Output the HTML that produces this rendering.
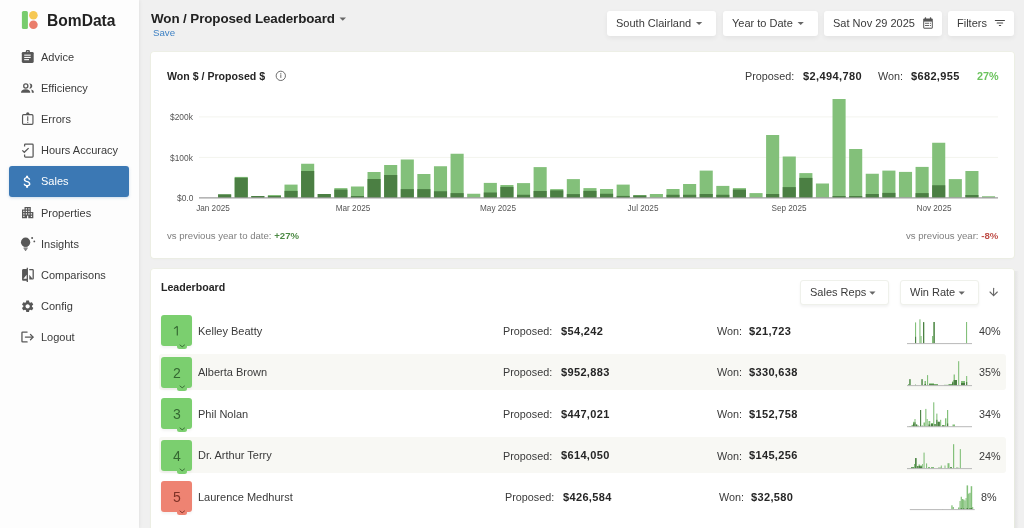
<!DOCTYPE html>
<html><head><meta charset="utf-8">
<style>
html,body{margin:0;padding:0;}
body{width:1024px;height:528px;overflow:hidden;position:relative;background:#f0f0f0;font-family:"Liberation Sans", sans-serif;}
.t{position:absolute;white-space:nowrap;line-height:normal;will-change:transform;}
</style></head><body>
<div style="position:absolute;left:0px;top:0px;width:139px;height:528px;background:#fdfdfd;box-shadow:0 0 4px rgba(0,0,0,0.09);"></div><svg style="position:absolute;left:0;top:0" width="140" height="40">
<rect x="21.9" y="11" width="6" height="18" rx="1.6" fill="#78cc6d"/>
<circle cx="33.4" cy="15.2" r="4.3" fill="#f6c853"/>
<circle cx="33.4" cy="24.8" r="4.3" fill="#ea7d6b"/>
</svg><div class="t" style="left:47.00px;top:12.48px;font-size:15.6px;font-weight:700;color:#222;">BomData</div><div style="position:absolute;left:9px;top:166.1px;width:120.2px;height:31.1px;background:#3b78b4;border-radius:3px;box-shadow:0 1px 3px rgba(59,120,180,0.25);"></div><svg style="position:absolute;left:0;top:0" width="140" height="360">
<g fill="#575757">
<rect x="21.8" y="52" width="11.9" height="10.9" rx="1.3"/>
<rect x="25.8" y="50" width="4.1" height="3" rx="1.2"/>
</g>
<g fill="#fdfdfd">
<circle cx="27.85" cy="51.6" r="0.55"/>
<rect x="24.2" y="54.6" width="6.5" height="1.1"/>
<rect x="24.2" y="56.9" width="6.5" height="1.1"/>
<rect x="24.2" y="59.1" width="4.8" height="1.1"/>
</g>
<g fill="#575757">
<circle cx="25.8" cy="86" r="2.1" fill="none" stroke="#575757" stroke-width="1.3"/>
<path d="M29.3 83.6 A2.45 2.45 0 1 1 29.3 88.4 A3.4 3.4 0 0 0 29.3 83.6 Z"/>
<path d="M21 92.8 Q21 89.2 25.65 89.2 Q30.3 89.2 30.3 92.8 Z"/>
<path d="M31.1 89.5 Q33.9 90 33.9 92.8 L31.9 92.8 Q31.9 90.8 31.1 89.5 Z"/>
</g>
<g fill="none" stroke="#575757" stroke-width="1.15">
<rect x="22.55" y="114.65" width="10.4" height="9.7" rx="1"/>
<path d="M25.9 115 C26.1 112.9 26.7 112.3 27.75 112.3 C28.8 112.3 29.4 112.9 29.6 115 Z" fill="#575757" stroke="none"/>
<path d="M24.6 146.6 V145 Q24.6 144.2 25.4 144.2 H32.3 Q33.1 144.2 33.1 145 V156.3 Q33.1 157.1 32.3 157.1 H25.4 Q24.6 157.1 24.6 156.3 V154.6" stroke-width="1.25"/>
<path d="M22.3 150.4 L24.3 152.3 L28.6 148.1" stroke-width="1.25"/>
</g>
<g fill="#575757">
<rect x="27.2" y="116.3" width="1.1" height="4.6"/>
<rect x="27.2" y="121.8" width="1.1" height="1.1"/>
</g>
<path fill="#ffffff" transform="translate(19.4,173.7) scale(0.667)" d="M11.8 10.9c-2.27-.59-3-1.2-3-2.15 0-1.09 1.01-1.85 2.7-1.85 1.78 0 2.440.85 2.5 2.1h2.21c-.07-1.72-1.12-3.3-3.210-3.81V3h-3v2.16c-1.94.42-3.5 1.68-3.5 3.61 0 2.31 1.91 3.46 4.7 4.13 2.5.6 3 1.48 3 2.41 0 .69-.49 1.79-2.7 1.79-2.06 0-2.87-.92-2.98-2.1h-2.2c.12 2.19 1.76 3.42 3.68 3.83V21h3v-2.15c1.95-.37 3.5-1.5 3.5-3.55 0-2.84-2.43-3.81-4.7-4.4z"/>
<path fill="#575757" transform="translate(20.1,205.1) scale(0.63)" d="M17 11V3H7v4H3v14h8v-4h2v4h8V11h-4zM7 19H5v-2h2v2zm0-4H5v-2h2v2zm0-4H5V9h2v2zm4 4H9v-2h2v2zm0-4H9V9h2v2zm0-4H9V5h2v2zm4 8h-2v-2h2v2zm0-4h-2V9h2v2zm0-4h-2V5h2v2zm4 12h-2v-2h2v2zm0-4h-2v-2h2v2z"/>
<g fill="#575757">
<circle cx="25.6" cy="242.2" r="4.65"/>
<rect x="23.6" y="246.3" width="4" height="1"/>
<rect x="23.6" y="247.8" width="4" height="0.9"/>
<path d="M23.9 249.2 H27.3 L25.6 250.9 Z"/>
<circle cx="32.1" cy="237.9" r="1"/>
<circle cx="34.3" cy="241.4" r="0.9"/>
</g>
<path fill="#575757" transform="translate(20.1,267.0) scale(0.655)" d="M10 3H5c-1.1 0-2 .9-2 2v14c0 1.1.9 2 2 2h5v2h2V1h-2v2zm0 15H5l5-6v6zm9-15h-5v2h5v13l-5-6v7h5c1.1 0 2-.9 2-2V5c0-1.1-.9-2-2-2z"/>
<path fill="#575757" transform="translate(20.45,299.1) scale(0.6)" d="M19.14 12.94c.04-.3.06-.61.06-.94 0-.32-.02-.64-.07-.94l2.03-1.58c.18-.14.23-.41.12-.61l-1.92-3.32c-.12-.22-.37-.29-.59-.22l-2.39.96c-.5-.38-1.03-.7-1.620-.94l-.36-2.54c-.04-.24-.24-.41-.48-.41h-3.84c-.24 0-.43.17-.47.41l-.36 2.54c-.59.24-1.13.57-1.62.94l-2.39-.96c-.22-.08-.47 0-.59.22L2.74 8.87c-.12.21-.08.47.12.61l2.03 1.58c-.05.3-.09.63-.09.94s.02.64.07.94l-2.03 1.58c-.18.14-.23.41-.12.61l1.92 3.32c.12.22.37.29.59.22l2.39-.96c.5.38 1.03.7 1.62.94l.36 2.54c.05.24.24.41.48.41h3.84c.24 0 .44-.17.47-.41l.36-2.54c.59-.24 1.13-.56 1.62-.94l2.39.96c.22.08.47 0 .59-.22l1.92-3.32c.12-.22.07-.47-.12-.61l-2.010-1.58zM12 15.6c-1.98 0-3.6-1.62-3.6-3.6s1.62-3.6 3.6-3.6 3.6 1.62 3.6 3.6-1.62 3.6-3.6 3.6z"/>
<g fill="none" stroke="#575757" stroke-width="1.3" stroke-linecap="round" stroke-linejoin="round">
<path d="M27.1 332.1 H22.6 Q21.95 332.1 21.95 332.75 V341.25 Q21.95 341.9 22.6 341.9 H27.1"/>
<path d="M25.4 337.1 H32.9"/>
<path d="M30.5 334.5 L33.1 337.1 L30.5 339.7"/>
</g>
</svg><div class="t" style="left:40.60px;top:51.05px;font-size:11px;font-weight:400;color:#3a3a3a;">Advice</div><div class="t" style="left:40.60px;top:82.14px;font-size:11px;font-weight:400;color:#3a3a3a;">Efficiency</div><div class="t" style="left:40.60px;top:113.25px;font-size:11px;font-weight:400;color:#3a3a3a;">Errors</div><div class="t" style="left:40.60px;top:144.34px;font-size:11px;font-weight:400;color:#3a3a3a;">Hours Accuracy</div><div class="t" style="left:40.60px;top:175.44px;font-size:11px;font-weight:400;color:#ffffff;">Sales</div><div class="t" style="left:40.60px;top:206.54px;font-size:11px;font-weight:400;color:#3a3a3a;">Properties</div><div class="t" style="left:40.60px;top:237.65px;font-size:11px;font-weight:400;color:#3a3a3a;">Insights</div><div class="t" style="left:40.60px;top:268.75px;font-size:11px;font-weight:400;color:#3a3a3a;">Comparisons</div><div class="t" style="left:40.60px;top:299.85px;font-size:11px;font-weight:400;color:#3a3a3a;">Config</div><div class="t" style="left:40.60px;top:330.95px;font-size:11px;font-weight:400;color:#3a3a3a;">Logout</div><div class="t" style="left:151.00px;top:10.87px;font-size:13.4px;font-weight:700;color:#222;letter-spacing:-0.1px;">Won / Proposed Leaderboard</div><svg style="position:absolute;left:338px;top:16px" width="10" height="6"><path d="M1.5 1.5 L8 1.5 L4.75 4.8 Z" fill="#666"/></svg><div class="t" style="left:153.00px;top:26.82px;font-size:9.7px;font-weight:400;color:#3f82c4;">Save</div><div style="position:absolute;left:606.5px;top:11px;width:109.29999999999995px;height:24.6px;background:#fff;border-radius:3px;box-shadow:0 2px 5px rgba(0,0,0,0.06);"></div><div class="t" style="left:615.90px;top:17.05px;font-size:11px;font-weight:400;color:#3a3a3a;">South Clairland</div><div style="position:absolute;left:722.8px;top:11px;width:95.20000000000005px;height:24.6px;background:#fff;border-radius:3px;box-shadow:0 2px 5px rgba(0,0,0,0.06);"></div><div class="t" style="left:732.20px;top:17.05px;font-size:11px;font-weight:400;color:#3a3a3a;">Year to Date</div><div style="position:absolute;left:824px;top:11px;width:117.79999999999995px;height:24.6px;background:#fff;border-radius:3px;box-shadow:0 2px 5px rgba(0,0,0,0.06);"></div><div class="t" style="left:833.40px;top:17.05px;font-size:11px;font-weight:400;color:#3a3a3a;">Sat Nov 29 2025</div><div style="position:absolute;left:948px;top:11px;width:65.79999999999995px;height:24.6px;background:#fff;border-radius:3px;box-shadow:0 2px 5px rgba(0,0,0,0.06);"></div><div class="t" style="left:957.40px;top:17.05px;font-size:11px;font-weight:400;color:#3a3a3a;">Filters</div><svg style="position:absolute;left:0;top:0" width="1024" height="40">
<path d="M696 22 H702.2 L699.1 25 Z" fill="#666"/>
<path d="M797.6 22 H803.8 L800.7 25 Z" fill="#666"/>
<g fill="#555">
<rect x="924.8" y="17.2" width="1.3" height="2.2" rx="0.5"/>
<rect x="929.9" y="17.2" width="1.3" height="2.2" rx="0.5"/>
<path d="M923.2 19.6 Q923.2 18.5 924.3 18.5 H931.7 Q932.8 18.5 932.8 19.6 V27.6 Q932.8 28.7 931.7 28.7 H924.3 Q923.2 28.7 923.2 27.6 Z"/>
</g>
<rect x="924.2" y="21.6" width="7.6" height="6.1" fill="#fff"/>
<g fill="#555">
<rect x="925" y="22.8" width="4.2" height="0.9"/>
<rect x="930" y="22.8" width="1" height="0.9"/>
<rect x="925" y="25" width="4.2" height="0.9"/>
<rect x="930" y="25" width="1" height="0.9"/>
</g>
<g stroke="#444" stroke-width="1.2" stroke-linecap="round">
<path d="M995.4 20.5 H1004.4"/>
<path d="M997.2 23 H1002.6"/>
<path d="M999.4 25.5 H1000.6"/>
</g>
</svg><div style="position:absolute;left:150.8px;top:52.4px;width:863.2px;height:205.8px;background:#fff;border-radius:3px;box-shadow:0 0 0 0.6px rgba(235,240,220,0.9), 0 1px 3px rgba(0,0,0,0.03);"></div><div class="t" style="left:166.50px;top:69.91px;font-size:10.6px;font-weight:700;color:#262626;">Won $ / Proposed $</div><svg style="position:absolute;left:270px;top:66px" width="20" height="20"><circle cx="10.8" cy="9.85" r="4.65" fill="none" stroke="#666" stroke-width="0.95"/><rect x="10.35" y="8.4" width="0.95" height="3.5" fill="#666"/><rect x="10.35" y="7.0" width="0.95" height="0.9" fill="#666"/></svg><div class="t" style="left:745.00px;top:70.03px;font-size:10.8px;font-weight:400;color:#3a3a3a;">Proposed:</div><div class="t" style="left:802.50px;top:69.84px;font-size:11px;font-weight:700;color:#262626;letter-spacing:0.4px;">$2,494,780</div><div class="t" style="left:878.30px;top:70.03px;font-size:10.8px;font-weight:400;color:#3a3a3a;">Won:</div><div class="t" style="left:911.00px;top:69.84px;font-size:11px;font-weight:700;color:#262626;letter-spacing:0.35px;">$682,955</div><div class="t" style="left:976.80px;top:70.03px;font-size:10.8px;font-weight:700;color:#6cc35e;">27%</div><svg style="position:absolute;left:0;top:0" width="1024" height="260"><line x1="199" y1="116.9" x2="998" y2="116.9" stroke="#f3f4ee" stroke-width="1"/><line x1="199" y1="157.4" x2="998" y2="157.4" stroke="#f3f4ee" stroke-width="1"/><rect x="218.06" y="194.40" width="13.1" height="3.1" fill="#83c07a"/><rect x="218.06" y="194.40" width="13.1" height="3.1" fill="#4b7f43"/><rect x="234.67" y="176.90" width="13.1" height="20.6" fill="#83c07a"/><rect x="234.67" y="177.75" width="13.1" height="19.75" fill="#4b7f43"/><rect x="251.27" y="196.00" width="13.1" height="1.5" fill="#83c07a"/><rect x="251.27" y="196.00" width="13.1" height="1.5" fill="#4b7f43"/><rect x="267.88" y="195.00" width="13.1" height="2.5" fill="#83c07a"/><rect x="267.88" y="196.00" width="13.1" height="1.5" fill="#4b7f43"/><rect x="284.49" y="184.60" width="13.1" height="12.9" fill="#83c07a"/><rect x="284.49" y="190.90" width="13.1" height="6.6" fill="#4b7f43"/><rect x="301.10" y="163.75" width="13.1" height="33.75" fill="#83c07a"/><rect x="301.10" y="171.00" width="13.1" height="26.5" fill="#4b7f43"/><rect x="317.70" y="194.00" width="13.1" height="3.5" fill="#83c07a"/><rect x="317.70" y="194.00" width="13.1" height="3.5" fill="#4b7f43"/><rect x="334.31" y="188.10" width="13.1" height="9.4" fill="#83c07a"/><rect x="334.31" y="189.60" width="13.1" height="7.9" fill="#4b7f43"/><rect x="350.92" y="186.50" width="13.1" height="11" fill="#83c07a"/><rect x="350.92" y="196.00" width="13.1" height="1.5" fill="#4b7f43"/><rect x="367.52" y="172.00" width="13.1" height="25.5" fill="#83c07a"/><rect x="367.52" y="179.00" width="13.1" height="18.5" fill="#4b7f43"/><rect x="384.13" y="165.00" width="13.1" height="32.5" fill="#83c07a"/><rect x="384.13" y="175.00" width="13.1" height="22.5" fill="#4b7f43"/><rect x="400.74" y="159.50" width="13.1" height="38" fill="#83c07a"/><rect x="400.74" y="189.10" width="13.1" height="8.4" fill="#4b7f43"/><rect x="417.34" y="174.00" width="13.1" height="23.5" fill="#83c07a"/><rect x="417.34" y="189.10" width="13.1" height="8.4" fill="#4b7f43"/><rect x="433.95" y="166.25" width="13.1" height="31.25" fill="#83c07a"/><rect x="433.95" y="191.25" width="13.1" height="6.25" fill="#4b7f43"/><rect x="450.56" y="153.75" width="13.1" height="43.75" fill="#83c07a"/><rect x="450.56" y="193.10" width="13.1" height="4.4" fill="#4b7f43"/><rect x="467.17" y="193.75" width="13.1" height="3.75" fill="#83c07a"/><rect x="483.77" y="182.90" width="13.1" height="14.6" fill="#83c07a"/><rect x="483.77" y="192.50" width="13.1" height="5" fill="#4b7f43"/><rect x="500.38" y="185.00" width="13.1" height="12.5" fill="#83c07a"/><rect x="500.38" y="186.90" width="13.1" height="10.6" fill="#4b7f43"/><rect x="516.99" y="183.10" width="13.1" height="14.4" fill="#83c07a"/><rect x="516.99" y="194.75" width="13.1" height="2.75" fill="#4b7f43"/><rect x="533.59" y="167.10" width="13.1" height="30.4" fill="#83c07a"/><rect x="533.59" y="191.00" width="13.1" height="6.5" fill="#4b7f43"/><rect x="550.20" y="189.10" width="13.1" height="8.4" fill="#83c07a"/><rect x="550.20" y="190.40" width="13.1" height="7.1" fill="#4b7f43"/><rect x="566.81" y="179.10" width="13.1" height="18.4" fill="#83c07a"/><rect x="566.81" y="194.10" width="13.1" height="3.4" fill="#4b7f43"/><rect x="583.41" y="188.10" width="13.1" height="9.4" fill="#83c07a"/><rect x="583.41" y="190.90" width="13.1" height="6.6" fill="#4b7f43"/><rect x="600.02" y="189.00" width="13.1" height="8.5" fill="#83c07a"/><rect x="600.02" y="193.75" width="13.1" height="3.75" fill="#4b7f43"/><rect x="616.63" y="184.60" width="13.1" height="12.9" fill="#83c07a"/><rect x="616.63" y="195.90" width="13.1" height="1.6" fill="#4b7f43"/><rect x="633.24" y="195.00" width="13.1" height="2.5" fill="#83c07a"/><rect x="633.24" y="195.50" width="13.1" height="2" fill="#4b7f43"/><rect x="649.84" y="194.00" width="13.1" height="3.5" fill="#83c07a"/><rect x="666.45" y="189.00" width="13.1" height="8.5" fill="#83c07a"/><rect x="666.45" y="194.75" width="13.1" height="2.75" fill="#4b7f43"/><rect x="683.06" y="184.00" width="13.1" height="13.5" fill="#83c07a"/><rect x="683.06" y="194.75" width="13.1" height="2.75" fill="#4b7f43"/><rect x="699.66" y="170.60" width="13.1" height="26.9" fill="#83c07a"/><rect x="699.66" y="194.00" width="13.1" height="3.5" fill="#4b7f43"/><rect x="716.27" y="185.90" width="13.1" height="11.6" fill="#83c07a"/><rect x="716.27" y="194.75" width="13.1" height="2.75" fill="#4b7f43"/><rect x="732.88" y="188.10" width="13.1" height="9.4" fill="#83c07a"/><rect x="732.88" y="189.60" width="13.1" height="7.9" fill="#4b7f43"/><rect x="749.48" y="193.10" width="13.1" height="4.4" fill="#83c07a"/><rect x="766.09" y="135.00" width="13.1" height="62.5" fill="#83c07a"/><rect x="766.09" y="194.00" width="13.1" height="3.5" fill="#4b7f43"/><rect x="782.70" y="156.50" width="13.1" height="41" fill="#83c07a"/><rect x="782.70" y="187.10" width="13.1" height="10.4" fill="#4b7f43"/><rect x="799.31" y="173.10" width="13.1" height="24.4" fill="#83c07a"/><rect x="799.31" y="177.90" width="13.1" height="19.6" fill="#4b7f43"/><rect x="815.91" y="183.50" width="13.1" height="14" fill="#83c07a"/><rect x="832.52" y="99.00" width="13.1" height="98.5" fill="#83c07a"/><rect x="832.52" y="196.00" width="13.1" height="1.5" fill="#4b7f43"/><rect x="849.13" y="149.00" width="13.1" height="48.5" fill="#83c07a"/><rect x="849.13" y="196.00" width="13.1" height="1.5" fill="#4b7f43"/><rect x="865.73" y="173.75" width="13.1" height="23.75" fill="#83c07a"/><rect x="865.73" y="194.00" width="13.1" height="3.5" fill="#4b7f43"/><rect x="882.34" y="170.60" width="13.1" height="26.9" fill="#83c07a"/><rect x="882.34" y="192.90" width="13.1" height="4.6" fill="#4b7f43"/><rect x="898.95" y="171.90" width="13.1" height="25.6" fill="#83c07a"/><rect x="915.55" y="166.90" width="13.1" height="30.6" fill="#83c07a"/><rect x="915.55" y="193.10" width="13.1" height="4.4" fill="#4b7f43"/><rect x="932.16" y="142.75" width="13.1" height="54.75" fill="#83c07a"/><rect x="932.16" y="185.25" width="13.1" height="12.25" fill="#4b7f43"/><rect x="948.77" y="179.10" width="13.1" height="18.4" fill="#83c07a"/><rect x="965.38" y="171.00" width="13.1" height="26.5" fill="#83c07a"/><rect x="965.38" y="195.00" width="13.1" height="2.5" fill="#4b7f43"/><rect x="981.98" y="196.25" width="13.1" height="1.25" fill="#83c07a"/><line x1="199" y1="197.9" x2="998" y2="197.9" stroke="#858585" stroke-width="1"/></svg><div class="t" style="right:831.20px;top:112.40px;font-size:8.4px;font-weight:400;color:#555;">$200k</div><div class="t" style="right:831.20px;top:152.90px;font-size:8.4px;font-weight:400;color:#555;">$100k</div><div class="t" style="right:831.20px;top:192.80px;font-size:8.4px;font-weight:400;color:#555;">$0.0</div><div class="t" style="left:213.00px;transform:translateX(-50%);top:203.88px;font-size:8.2px;font-weight:400;color:#555;">Jan 2025</div><div class="t" style="left:352.80px;transform:translateX(-50%);top:203.88px;font-size:8.2px;font-weight:400;color:#555;">Mar 2025</div><div class="t" style="left:497.50px;transform:translateX(-50%);top:203.88px;font-size:8.2px;font-weight:400;color:#555;">May 2025</div><div class="t" style="left:642.50px;transform:translateX(-50%);top:203.88px;font-size:8.2px;font-weight:400;color:#555;">Jul 2025</div><div class="t" style="left:789.20px;transform:translateX(-50%);top:203.88px;font-size:8.2px;font-weight:400;color:#555;">Sep 2025</div><div class="t" style="left:934.10px;transform:translateX(-50%);top:203.88px;font-size:8.2px;font-weight:400;color:#555;">Nov 2025</div><div class="t" style="left:166.90px;top:230.11px;font-size:9.6px;font-weight:400;color:#7f7f7f;">vs previous year to date: <b style="color:#4d8a45">+27%</b></div><div class="t" style="right:25.50px;top:230.11px;font-size:9.6px;font-weight:400;color:#7f7f7f;">vs previous year: <b style="color:#c0504a">-8%</b></div><div style="position:absolute;left:1013px;top:271px;width:6px;height:300px;background:linear-gradient(to right, rgba(0,0,0,0.05), rgba(0,0,0,0.03) 60%, rgba(0,0,0,0));"></div><div style="position:absolute;left:150.8px;top:269px;width:863.2px;height:300px;background:#fff;border-radius:3px;box-shadow:0 0 0 0.6px rgba(235,240,220,0.9), 0 1px 3px rgba(0,0,0,0.03);"></div><div class="t" style="left:161.40px;top:281.01px;font-size:10.6px;font-weight:700;color:#262626;">Leaderboard</div><div style="position:absolute;left:799.75px;top:280px;width:89.5px;height:25px;background:#fff;border:1px solid #eff1eb;box-sizing:border-box;border-radius:3px;box-shadow:0 2px 3px rgba(0,0,0,0.05);"></div><div class="t" style="left:809.75px;top:286.25px;font-size:11px;font-weight:400;color:#3a3a3a;">Sales Reps</div><div style="position:absolute;left:899.75px;top:280px;width:79.5px;height:25px;background:#fff;border:1px solid #eff1eb;box-sizing:border-box;border-radius:3px;box-shadow:0 2px 3px rgba(0,0,0,0.05);"></div><div class="t" style="left:909.75px;top:286.25px;font-size:11px;font-weight:400;color:#3a3a3a;">Win Rate</div><svg style="position:absolute;left:0;top:270px" width="1024" height="40">
<path d="M869.3 21.6 H875.5 L872.4 24.7 Z" fill="#666"/>
<path d="M958.6 21.6 H964.8 L961.7 24.7 Z" fill="#666"/>
<g fill="none" stroke="#666" stroke-width="1.1" stroke-linecap="round" stroke-linejoin="round">
<path d="M993.6 18.2 V25.6"/>
<path d="M990 22 L993.6 25.6 L997.3 22"/>
</g>
</svg><div style="position:absolute;left:161.3px;top:315.0px;width:30.7px;height:31px;background:#7bcf6f;border-radius:3px;box-shadow:0 2px 3px rgba(0,0,0,0.05);"></div><div style="position:absolute;left:177px;top:344.0px;width:10.2px;height:5px;background:#7bcf6f;border-radius:0 0 2.5px 2.5px;"></div><svg style="position:absolute;left:170px;top:315.00px" width="14" height="31"><path d="M7.3 11.2 V20.4 M7.3 11.2 L4.1 13.6" fill="none" stroke="#356832" stroke-width="1.15" stroke-linecap="butt" stroke-linejoin="round"/></svg><svg style="position:absolute;left:177px;top:342.60px" width="11" height="6"><path d="M3 2 L5.2 3.8 L7.5 2" fill="none" stroke="#356832" stroke-width="0.95" stroke-linecap="round" stroke-linejoin="round"/></svg><div class="t" style="left:197.50px;top:324.75px;font-size:11px;font-weight:400;color:#3a3a3a;">Kelley Beatty</div><div class="t" style="left:503.40px;top:324.93px;font-size:10.8px;font-weight:400;color:#3a3a3a;">Proposed:</div><div class="t" style="left:561.20px;top:324.75px;font-size:11px;font-weight:700;color:#262626;letter-spacing:0.35px;">$54,242</div><div class="t" style="left:716.60px;top:324.93px;font-size:10.8px;font-weight:400;color:#3a3a3a;">Won:</div><div class="t" style="left:748.80px;top:324.75px;font-size:11px;font-weight:700;color:#262626;letter-spacing:0.35px;">$21,723</div><div class="t" style="right:23.50px;top:324.93px;font-size:10.8px;font-weight:400;color:#3a3a3a;">40%</div><div style="position:absolute;left:158.8px;top:353.75px;width:847.2px;height:35.8px;background:#f8f8f4;border-radius:3px;"></div><div style="position:absolute;left:161.3px;top:356.55px;width:30.7px;height:31px;background:#7bcf6f;border-radius:3px;box-shadow:0 2px 3px rgba(0,0,0,0.05);"></div><div style="position:absolute;left:177px;top:385.55px;width:10.2px;height:5px;background:#7bcf6f;border-radius:0 0 2.5px 2.5px;"></div><div class="t" style="left:176.60px;transform:translateX(-50%);top:364.58px;font-size:14px;font-weight:400;color:#356832;">2</div><svg style="position:absolute;left:177px;top:384.15px" width="11" height="6"><path d="M3 2 L5.2 3.8 L7.5 2" fill="none" stroke="#356832" stroke-width="0.95" stroke-linecap="round" stroke-linejoin="round"/></svg><div class="t" style="left:197.50px;top:366.30px;font-size:11px;font-weight:400;color:#3a3a3a;">Alberta Brown</div><div class="t" style="left:503.40px;top:366.48px;font-size:10.8px;font-weight:400;color:#3a3a3a;">Proposed:</div><div class="t" style="left:561.20px;top:366.30px;font-size:11px;font-weight:700;color:#262626;letter-spacing:0.35px;">$952,883</div><div class="t" style="left:716.60px;top:366.48px;font-size:10.8px;font-weight:400;color:#3a3a3a;">Won:</div><div class="t" style="left:748.80px;top:366.30px;font-size:11px;font-weight:700;color:#262626;letter-spacing:0.35px;">$330,638</div><div class="t" style="right:23.50px;top:366.48px;font-size:10.8px;font-weight:400;color:#3a3a3a;">35%</div><div style="position:absolute;left:161.3px;top:398.1px;width:30.7px;height:31px;background:#7bcf6f;border-radius:3px;box-shadow:0 2px 3px rgba(0,0,0,0.05);"></div><div style="position:absolute;left:177px;top:427.1px;width:10.2px;height:5px;background:#7bcf6f;border-radius:0 0 2.5px 2.5px;"></div><div class="t" style="left:176.60px;transform:translateX(-50%);top:406.13px;font-size:14px;font-weight:400;color:#356832;">3</div><svg style="position:absolute;left:177px;top:425.70px" width="11" height="6"><path d="M3 2 L5.2 3.8 L7.5 2" fill="none" stroke="#356832" stroke-width="0.95" stroke-linecap="round" stroke-linejoin="round"/></svg><div class="t" style="left:197.50px;top:407.85px;font-size:11px;font-weight:400;color:#3a3a3a;">Phil Nolan</div><div class="t" style="left:503.40px;top:408.03px;font-size:10.8px;font-weight:400;color:#3a3a3a;">Proposed:</div><div class="t" style="left:561.20px;top:407.85px;font-size:11px;font-weight:700;color:#262626;letter-spacing:0.35px;">$447,021</div><div class="t" style="left:716.60px;top:408.03px;font-size:10.8px;font-weight:400;color:#3a3a3a;">Won:</div><div class="t" style="left:748.80px;top:407.85px;font-size:11px;font-weight:700;color:#262626;letter-spacing:0.35px;">$152,758</div><div class="t" style="right:23.50px;top:408.03px;font-size:10.8px;font-weight:400;color:#3a3a3a;">34%</div><div style="position:absolute;left:158.8px;top:436.84999999999997px;width:847.2px;height:35.8px;background:#f8f8f4;border-radius:3px;"></div><div style="position:absolute;left:161.3px;top:439.65px;width:30.7px;height:31px;background:#7bcf6f;border-radius:3px;box-shadow:0 2px 3px rgba(0,0,0,0.05);"></div><div style="position:absolute;left:177px;top:468.65px;width:10.2px;height:5px;background:#7bcf6f;border-radius:0 0 2.5px 2.5px;"></div><div class="t" style="left:176.60px;transform:translateX(-50%);top:447.68px;font-size:14px;font-weight:400;color:#356832;">4</div><svg style="position:absolute;left:177px;top:467.25px" width="11" height="6"><path d="M3 2 L5.2 3.8 L7.5 2" fill="none" stroke="#356832" stroke-width="0.95" stroke-linecap="round" stroke-linejoin="round"/></svg><div class="t" style="left:197.50px;top:449.39px;font-size:11px;font-weight:400;color:#3a3a3a;">Dr. Arthur Terry</div><div class="t" style="left:503.40px;top:449.58px;font-size:10.8px;font-weight:400;color:#3a3a3a;">Proposed:</div><div class="t" style="left:561.20px;top:449.39px;font-size:11px;font-weight:700;color:#262626;letter-spacing:0.35px;">$614,050</div><div class="t" style="left:716.60px;top:449.58px;font-size:10.8px;font-weight:400;color:#3a3a3a;">Won:</div><div class="t" style="left:748.80px;top:449.39px;font-size:11px;font-weight:700;color:#262626;letter-spacing:0.35px;">$145,256</div><div class="t" style="right:23.50px;top:449.58px;font-size:10.8px;font-weight:400;color:#3a3a3a;">24%</div><div style="position:absolute;left:161.3px;top:481.2px;width:30.7px;height:31px;background:#ee8372;border-radius:3px;box-shadow:0 2px 3px rgba(0,0,0,0.05);"></div><div style="position:absolute;left:177px;top:510.2px;width:10.2px;height:5px;background:#ee8372;border-radius:0 0 2.5px 2.5px;"></div><div class="t" style="left:176.60px;transform:translateX(-50%);top:489.23px;font-size:14px;font-weight:400;color:#7e3226;">5</div><svg style="position:absolute;left:177px;top:508.80px" width="11" height="6"><path d="M3 2 L5.2 3.8 L7.5 2" fill="none" stroke="#7e3226" stroke-width="0.95" stroke-linecap="round" stroke-linejoin="round"/></svg><div class="t" style="left:197.50px;top:490.94px;font-size:11px;font-weight:400;color:#3a3a3a;">Laurence Medhurst</div><div class="t" style="left:505.40px;top:491.13px;font-size:10.8px;font-weight:400;color:#3a3a3a;">Proposed:</div><div class="t" style="left:563.20px;top:490.94px;font-size:11px;font-weight:700;color:#262626;letter-spacing:0.35px;">$426,584</div><div class="t" style="left:718.60px;top:491.13px;font-size:10.8px;font-weight:400;color:#3a3a3a;">Won:</div><div class="t" style="left:750.80px;top:490.94px;font-size:11px;font-weight:700;color:#262626;letter-spacing:0.35px;">$32,580</div><div class="t" style="right:27.10px;top:491.13px;font-size:10.8px;font-weight:400;color:#3a3a3a;">8%</div><svg style="position:absolute;left:0;top:0" width="1024" height="528"><rect x="915.0" y="322.4" width="1.1" height="21.10" fill="#83c07a"/><rect x="915.0" y="336.8" width="1.1" height="6.70" fill="#4b7f43"/><rect x="919.4" y="319.3" width="1.1" height="24.20" fill="#83c07a"/><rect x="920.5" y="336.0" width="1.1" height="7.50" fill="#83c07a"/><rect x="923.0" y="322.2" width="1.2" height="21.30" fill="#83c07a"/><rect x="923.0" y="322.2" width="1.2" height="21.30" fill="#4b7f43"/><rect x="932.0" y="336.0" width="1.3" height="7.50" fill="#83c07a"/><rect x="933.5" y="322.0" width="1.2" height="21.50" fill="#83c07a"/><rect x="933.5" y="322.0" width="1.2" height="21.50" fill="#4b7f43"/><rect x="966.0" y="322.0" width="1.1" height="21.50" fill="#83c07a"/><rect x="907" y="343.10" width="65.00" height="1" fill="#b8b8b8"/><rect x="908.0" y="384.0" width="1.4" height="1.50" fill="#83c07a"/><rect x="909.4" y="379.2" width="1.1" height="6.30" fill="#83c07a"/><rect x="909.4" y="379.2" width="1.1" height="6.30" fill="#4b7f43"/><rect x="915.0" y="384.5" width="1.0" height="1.00" fill="#83c07a"/><rect x="921.5" y="379.2" width="1.1" height="6.30" fill="#83c07a"/><rect x="921.5" y="379.2" width="1.1" height="6.30" fill="#4b7f43"/><rect x="924.5" y="381.0" width="1.5" height="4.50" fill="#83c07a"/><rect x="924.5" y="384.0" width="1.5" height="1.50" fill="#4b7f43"/><rect x="927.0" y="375.1" width="1.1" height="10.40" fill="#83c07a"/><rect x="929.0" y="383.3" width="5.0" height="2.20" fill="#83c07a"/><rect x="929.0" y="384.2" width="5.0" height="1.30" fill="#4b7f43"/><rect x="934.0" y="384.0" width="4.0" height="1.50" fill="#83c07a"/><rect x="934.0" y="384.8" width="4.0" height="0.70" fill="#4b7f43"/><rect x="944.0" y="384.8" width="4.0" height="0.70" fill="#83c07a"/><rect x="948.5" y="384.0" width="3.5" height="1.50" fill="#83c07a"/><rect x="948.5" y="384.7" width="3.5" height="0.80" fill="#4b7f43"/><rect x="952.0" y="381.5" width="1.5" height="4.00" fill="#83c07a"/><rect x="952.0" y="382.5" width="1.5" height="3.00" fill="#4b7f43"/><rect x="953.6" y="374.5" width="1.3" height="11.00" fill="#83c07a"/><rect x="953.6" y="380.0" width="1.3" height="5.50" fill="#4b7f43"/><rect x="955.0" y="380.0" width="2.0" height="5.50" fill="#83c07a"/><rect x="955.0" y="380.0" width="2.0" height="5.50" fill="#4b7f43"/><rect x="958.1" y="361.2" width="1.1" height="24.30" fill="#83c07a"/><rect x="961.0" y="381.0" width="4.0" height="4.50" fill="#83c07a"/><rect x="961.0" y="383.0" width="4.0" height="2.50" fill="#4b7f43"/><rect x="966.1" y="376.0" width="1.1" height="9.50" fill="#83c07a"/><rect x="966.1" y="382.0" width="1.1" height="3.50" fill="#4b7f43"/><rect x="907" y="385.10" width="65.00" height="1" fill="#b8b8b8"/><rect x="909" y="426.0" width="2" height="0.60" fill="#83c07a"/><rect x="911.5" y="424.9" width="1.5" height="1.70" fill="#83c07a"/><rect x="913" y="421.8" width="1.5" height="4.80" fill="#83c07a"/><rect x="913" y="423.5" width="1.5" height="3.10" fill="#4b7f43"/><rect x="914.5" y="419.0" width="1.0" height="7.60" fill="#83c07a"/><rect x="914.5" y="422.3" width="1.0" height="4.30" fill="#4b7f43"/><rect x="915.8" y="424.5" width="1.4" height="2.10" fill="#83c07a"/><rect x="915.8" y="424.5" width="1.4" height="2.10" fill="#4b7f43"/><rect x="917" y="425.5" width="2" height="1.10" fill="#83c07a"/><rect x="920.1" y="410.0" width="1.0" height="16.60" fill="#83c07a"/><rect x="920.1" y="410.0" width="1.0" height="16.60" fill="#4b7f43"/><rect x="921.5" y="425.5" width="1.5" height="1.10" fill="#83c07a"/><rect x="923.5" y="422.5" width="1.5" height="4.10" fill="#83c07a"/><rect x="925.3" y="408.9" width="1.1" height="17.70" fill="#83c07a"/><rect x="926.6" y="419.0" width="1.1" height="7.60" fill="#83c07a"/><rect x="928.5" y="421.0" width="1.8" height="5.60" fill="#83c07a"/><rect x="928.5" y="424.5" width="1.8" height="2.10" fill="#4b7f43"/><rect x="931" y="423.0" width="2" height="3.60" fill="#83c07a"/><rect x="931" y="424.0" width="2" height="2.60" fill="#4b7f43"/><rect x="933.2" y="402.3" width="1.1" height="24.30" fill="#83c07a"/><rect x="934.4" y="424.0" width="1.2" height="2.60" fill="#83c07a"/><rect x="934.4" y="424.0" width="1.2" height="2.60" fill="#4b7f43"/><rect x="936.3" y="413.6" width="1.1" height="13.00" fill="#83c07a"/><rect x="936.3" y="419.8" width="1.1" height="6.80" fill="#4b7f43"/><rect x="937.6" y="421.8" width="2.2" height="4.80" fill="#83c07a"/><rect x="937.6" y="421.8" width="2.2" height="4.80" fill="#4b7f43"/><rect x="940.1" y="419.8" width="1.1" height="6.80" fill="#83c07a"/><rect x="942" y="425.0" width="2.5" height="1.60" fill="#83c07a"/><rect x="942" y="425.5" width="2.5" height="1.10" fill="#4b7f43"/><rect x="945" y="418.3" width="1.4" height="8.30" fill="#83c07a"/><rect x="947" y="410.0" width="1.2" height="16.60" fill="#83c07a"/><rect x="947" y="423.5" width="1.2" height="3.10" fill="#4b7f43"/><rect x="952.5" y="424.5" width="2.5" height="2.10" fill="#83c07a"/><rect x="907" y="426.20" width="65.00" height="1" fill="#b8b8b8"/><rect x="907" y="468.0" width="4" height="0.50" fill="#83c07a"/><rect x="911" y="467.0" width="3" height="1.50" fill="#83c07a"/><rect x="911" y="467.5" width="3" height="1.00" fill="#4b7f43"/><rect x="914" y="464.0" width="1.0" height="4.50" fill="#83c07a"/><rect x="915.1" y="458.1" width="1.4" height="10.40" fill="#83c07a"/><rect x="915.1" y="458.1" width="1.4" height="10.40" fill="#4b7f43"/><rect x="917.2" y="466.0" width="1.0" height="2.50" fill="#83c07a"/><rect x="917.2" y="466.0" width="1.0" height="2.50" fill="#4b7f43"/><rect x="918.5" y="464.5" width="1.5" height="4.00" fill="#83c07a"/><rect x="918.5" y="466.0" width="1.5" height="2.50" fill="#4b7f43"/><rect x="920" y="465.5" width="2" height="3.00" fill="#83c07a"/><rect x="920" y="466.5" width="2" height="2.00" fill="#4b7f43"/><rect x="922.2" y="464.0" width="0.8" height="4.50" fill="#83c07a"/><rect x="923.5" y="452.6" width="1.1" height="15.90" fill="#83c07a"/><rect x="926.0" y="463.4" width="1.1" height="5.10" fill="#83c07a"/><rect x="928" y="467.0" width="2" height="1.50" fill="#83c07a"/><rect x="931" y="467.0" width="3" height="1.50" fill="#83c07a"/><rect x="938" y="467.5" width="4" height="1.00" fill="#83c07a"/><rect x="940.8" y="465.5" width="1.0" height="3.00" fill="#83c07a"/><rect x="944.5" y="465.5" width="1.0" height="3.00" fill="#83c07a"/><rect x="947.5" y="463.2" width="2.0" height="5.30" fill="#83c07a"/><rect x="950" y="467.0" width="2" height="1.50" fill="#83c07a"/><rect x="950" y="467.5" width="2" height="1.00" fill="#4b7f43"/><rect x="953.0" y="444.2" width="1.2" height="24.30" fill="#83c07a"/><rect x="956" y="467.5" width="2.5" height="1.00" fill="#83c07a"/><rect x="959.8" y="449.1" width="1.1" height="19.40" fill="#83c07a"/><rect x="907" y="468.10" width="65.00" height="1" fill="#b8b8b8"/><rect x="942.2" y="509.0" width="1" height="0.50" fill="#83c07a"/><rect x="951.3" y="505.3" width="1.3" height="4.20" fill="#83c07a"/><rect x="952.6" y="507.0" width="1.3" height="2.50" fill="#83c07a"/><rect x="958" y="507.5" width="1.5" height="2.00" fill="#83c07a"/><rect x="959.5" y="501.0" width="1.2" height="8.50" fill="#83c07a"/><rect x="960.7" y="496.75" width="1.2" height="12.75" fill="#83c07a"/><rect x="960.7" y="508.0" width="1.2" height="1.50" fill="#4b7f43"/><rect x="961.9" y="499.0" width="1.2" height="10.50" fill="#83c07a"/><rect x="963.1" y="499.5" width="1.3" height="10.00" fill="#83c07a"/><rect x="963.1" y="508.3" width="1.3" height="1.20" fill="#4b7f43"/><rect x="964.4" y="500.5" width="1.2" height="9.00" fill="#83c07a"/><rect x="965.6" y="498.0" width="1.0" height="11.50" fill="#83c07a"/><rect x="966.6" y="485.4" width="1.5" height="24.10" fill="#83c07a"/><rect x="966.6" y="508.0" width="1.5" height="1.50" fill="#4b7f43"/><rect x="968.1" y="493.6" width="1.3" height="15.90" fill="#83c07a"/><rect x="969.4" y="492.8" width="1.3" height="16.70" fill="#83c07a"/><rect x="969.4" y="508.0" width="1.3" height="1.50" fill="#4b7f43"/><rect x="970.7" y="486.2" width="1.5" height="23.30" fill="#83c07a"/><rect x="970.7" y="508.0" width="1.5" height="1.50" fill="#4b7f43"/><rect x="972.2" y="507.0" width="1.0" height="2.50" fill="#83c07a"/><rect x="909.8" y="509.10" width="64.90" height="1" fill="#b8b8b8"/></svg>
</body></html>
